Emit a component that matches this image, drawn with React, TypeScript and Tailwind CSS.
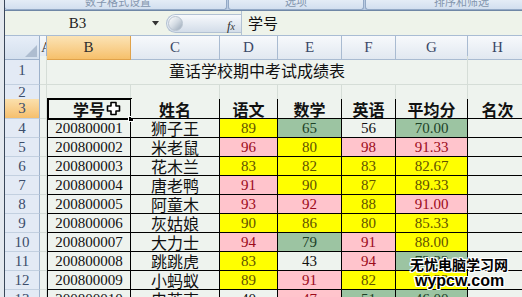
import React from 'react';

type C = 'y' | 'p' | 'g' | 'w';
const tone: Record<C, string> = {
  y: 'bg-[#ffff00] text-[#5f5200]',
  p: 'bg-[#ffc4cc] text-[#9c0a1a]',
  g: 'bg-[#9cc4a2] text-[#1d4227]',
  w: 'bg-[#eef3ee] text-[#111]',
};

type Row = [string, string, [string, C], [string, C], [string, C], [string, C]];
const rows: Row[] = [
  ['200800001', '狮子王', ['89', 'y'], ['65', 'g'], ['56', 'w'], ['70.00', 'g']],
  ['200800002', '米老鼠', ['96', 'p'], ['80', 'y'], ['98', 'p'], ['91.33', 'p']],
  ['200800003', '花木兰', ['83', 'y'], ['82', 'y'], ['83', 'y'], ['82.67', 'y']],
  ['200800004', '唐老鸭', ['91', 'p'], ['90', 'y'], ['87', 'y'], ['89.33', 'y']],
  ['200800005', '阿童木', ['93', 'p'], ['92', 'p'], ['88', 'y'], ['91.00', 'p']],
  ['200800006', '灰姑娘', ['90', 'y'], ['86', 'y'], ['80', 'y'], ['85.33', 'y']],
  ['200800007', '大力士', ['94', 'p'], ['79', 'g'], ['91', 'p'], ['88.00', 'y']],
  ['200800008', '跳跳虎', ['83', 'y'], ['43', 'w'], ['94', 'p'], ['73.33', 'g']],
  ['200800009', '小蚂蚁', ['89', 'y'], ['91', 'p'], ['82', 'y'], ['87.33', 'y']],
  ['200800010', '史莱克', ['40', 'w'], ['47', 'p'], ['51', 'g'], ['46.00', 'g']],
];

const GRID = 'grid grid-cols-[35px_7px_84px_89px_58px_64px_54px_72px_60px]';
const NUM = "font-['Liberation_Serif',serif] text-[15px] leading-none";
const CJK = "font-['Noto_Sans_CJK_SC',sans-serif]";
const RH =
  "flex items-center justify-center border-r border-b border-r-[#9db1cb] border-b-[#c3d0e0] font-['Liberation_Serif',serif] text-[15px] leading-none text-[#3b4d6b]";
const RH_BG = 'bg-[#e3eaf5]';
const LIGHT = 'border-r border-b border-[#d5ddd7]';
const A = 'bg-[#eef3ee] border-r border-b border-[#d5ddd7]';
const HALO =
  '[text-shadow:1px_1px_0_#fff,-1px_-1px_0_#fff,1px_-1px_0_#fff,-1px_1px_0_#fff,0_1px_0_#fff,0_-1px_0_#fff,1px_0_0_#fff,-1px_0_0_#fff]';

function RowHead({ n, active }: { n: number; active?: boolean }) {
  return (
    <div className={`${RH} ${active ? 'bg-linear-to-b from-[#fbe0ad] to-[#f6bf6c] text-[#2d3a52]' : RH_BG}`}>{n}</div>
  );
}

function Cursor() {
  return (
    <svg width="15" height="15" viewBox="0 0 15 15" className="absolute left-[58px] top-[2px]">
      <path
        d="M5 1.5h5v3.5h3.5v5H10v3.5H5V10H1.5V5H5z"
        fill="#fff"
        stroke="#000"
        strokeWidth="1.6"
        strokeLinejoin="round"
      />
    </svg>
  );
}

export default function App() {
  return (
    <div className="w-[522px] h-[297px] overflow-hidden flex relative bg-[#eef3ee]">
      <div className="w-[5px] shrink-0 bg-[#e4e9ef] border-r border-[#3a4759]" />
      <div className="flex-1 flex flex-col min-w-0">
        {/* ribbon */}
        <div className="h-[11px] shrink-0 flex bg-[#b9cbe2] border-b border-[#6f87a6] overflow-hidden">
          <div className="w-[222px] h-[10px] bg-linear-to-b from-[#e4ecf6] to-[#d2dfef] rounded-b-[3px] border-r border-b border-[#93a9c6] relative overflow-hidden">
            <span className={`${CJK} absolute left-[80px] -top-[7px] text-[11px] text-[#8496ae]`}>数字格式设置</span>
          </div>
          <div className="w-[136px] ml-[1px] h-[10px] bg-linear-to-b from-[#e4ecf6] to-[#d2dfef] rounded-b-[3px] border-x border-b border-[#93a9c6] relative overflow-hidden">
            <span className={`${CJK} absolute left-[56px] -top-[7px] text-[11px] text-[#8496ae]`}>选项</span>
          </div>
          <div className="flex-1 ml-[1px] h-[10px] bg-linear-to-b from-[#e4ecf6] to-[#d2dfef] rounded-bl-[3px] border-l border-b border-[#93a9c6] relative overflow-hidden">
            <span className={`${CJK} absolute left-[68px] -top-[7px] text-[11px] text-[#8496ae]`}>排序和筛选</span>
          </div>
        </div>
        {/* formula bar */}
        <div className="h-[25px] shrink-0 flex items-center bg-[#eef3ea] border-b border-[#a9bcd4]">
          <div className="w-[145px] flex justify-center items-center font-['Liberation_Serif',serif] text-[15px] text-[#222]">
            B3
          </div>
          <svg width="8" height="5" viewBox="0 0 8 5" className="ml-[2px]">
            <path d="M0 0h7L3.5 4.5z" fill="#333" />
          </svg>
          <div className="ml-[6px] w-[75px] h-[19px] rounded-l-full bg-linear-to-b from-[#f7f9fc] to-[#d3dde9] border border-r-0 border-[#b2c1d3] flex items-center relative">
            <div className="w-[15px] h-[15px] rounded-full ml-[1px] bg-linear-to-br from-[#ffffff] via-[#d3dbe3] to-[#9aa8b8] border border-[#b8c3cf]" />
            <span className="absolute right-[6px] top-[1px] font-['Liberation_Serif',serif] italic text-[13px] text-[#333]">
              f<span className="text-[10px]">x</span>
            </span>
          </div>
          <div className="h-[25px] border-l border-[#b2c1d3] pl-[6px] flex items-center">
            <span className={`${CJK} text-[15px] text-[#111]`}>学号</span>
          </div>
        </div>
        {/* column headers */}
        <div className={`${GRID} h-[20px] shrink-0`}>
          <div className="bg-linear-to-b from-[#e7eef8] to-[#d4e0ee] border-r border-b border-[#9db1cb] relative">
            <svg width="12" height="12" viewBox="0 0 12 12" className="absolute right-[2px] bottom-[2px]">
              <path d="M12 0V12H0z" fill="#aebdd0" />
            </svg>
          </div>
          <div className="bg-linear-to-b from-[#f7f9fc] to-[#e1e8f0] border-r border-b border-[#9db1cb] overflow-hidden flex items-center font-['Liberation_Serif',serif] text-[15px] text-[#333]">
            <span className="ml-[1px]">A</span>
          </div>
          {['B', 'C', 'D', 'E', 'F', 'G', 'H'].map((l) => (
            <div
              key={l}
              className={`flex items-center justify-center border-r border-b font-['Liberation_Serif',serif] text-[15px] ${
                l === 'B'
                  ? 'bg-linear-to-b from-[#fbe3b5] to-[#f6c06a] border-[#e0a24a] text-[#2d2d2d]'
                  : 'bg-linear-to-b from-[#f7f9fc] to-[#e1e8f0] border-[#a9bbd1] text-[#3a4766]'
              }`}
            >
              {l}
            </div>
          ))}
        </div>
        {/* row 1 */}
        <div className={`${GRID} h-[29px] shrink-0`}>
          <RowHead n={1} />
          <div className={A} />
          <div className={`col-span-6 ${LIGHT} flex items-center justify-center ${CJK} text-[16px] leading-none text-[#111]`}>
            童话学校期中考试成绩表
          </div>
          <div className={LIGHT} />
        </div>
        {/* row 2 */}
        <div className={`${GRID} h-[14px] shrink-0`}>
          <RowHead n={2} />
          <div className={A} />
          {[0, 1, 2, 3, 4, 5, 6].map((i) => (
            <div key={i} className="border-r border-[#d5ddd7] border-b border-b-black" />
          ))}
        </div>
        {/* row 3 header */}
        <div className={`${GRID} h-[20px] shrink-0`}>
          <RowHead n={3} active />
          <div className={A} />
          {['学号', '姓名', '语文', '数学', '英语', '平均分', '名次'].map((h, i) => (
            <div
              key={h}
              className={`relative flex items-center justify-center border-r border-b border-black ${i === 0 ? 'border-l' : ''} ${CJK} font-bold text-[16px] leading-none text-[#111] bg-[#eef3ee]`}
            >
              {h}
              {i === 0 && (
                <>
                  <div className="absolute -left-[1px] -top-[1px] -right-[2px] -bottom-[2px] border-2 border-black" />
                  <Cursor />
                  <div className="absolute -right-[4px] -bottom-[4px] w-[6px] h-[6px] bg-black border border-white" />
                </>
              )}
            </div>
          ))}
        </div>
        {/* data */}
        {rows.map((r, idx) => (
          <div key={r[0]} className={`${GRID} h-[19px] shrink-0`}>
            <RowHead n={idx + 4} />
            <div className={A} />
            <div className={`flex items-center justify-center border-l border-r border-b border-black ${NUM} text-[#111]`}>
              {r[0]}
            </div>
            <div className={`flex items-center justify-center border-r border-b border-black ${CJK} text-[16px] leading-none text-[#111]`}>
              {r[1]}
            </div>
            {[r[2], r[3], r[4], r[5]].map(([v, c], j) => (
              <div key={j} className={`flex items-center justify-center border-r border-b border-black ${NUM} ${tone[c]}`}>
                {v}
              </div>
            ))}
            <div className="border-r border-b border-black bg-[#eef3ee]" />
          </div>
        ))}
      </div>
      {/* watermark */}
      <div className="absolute left-[410px] top-[257px] flex flex-col items-start leading-none">
        <span className={`${CJK} font-bold text-[14px] text-black ${HALO}`}>无忧电脑学习网</span>
        <span className={`ml-[5px] mt-[2px] font-['Liberation_Sans',sans-serif] font-bold text-[16px] text-black ${HALO}`}>
          wypcw.com
        </span>
      </div>
    </div>
  );
}
